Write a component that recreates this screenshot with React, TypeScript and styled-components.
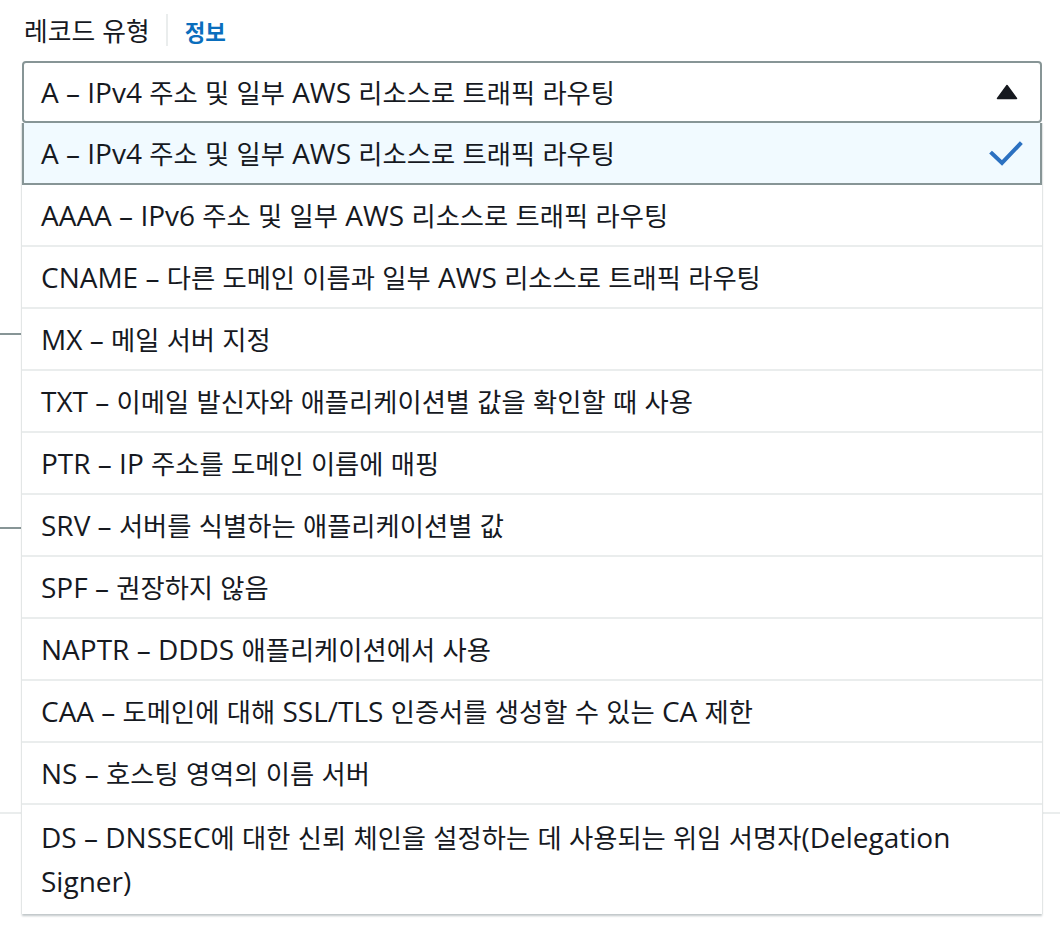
import React from "react";
import styled, { createGlobalStyle } from "styled-components";

const GlobalStyle = createGlobalStyle`
  html, body { margin: 0; padding: 0; background: #ffffff; }
  body {
    font-family: "Open Sans", "Noto Sans CJK KR", sans-serif;
    color: #16191f;
    -webkit-font-smoothing: antialiased;
  }
`;

const Page = styled.div`
  position: relative;
  width: 1060px;
  height: 926px;
  overflow: hidden;
`;

const Field = styled.div`
  position: relative;
  z-index: 2;
  padding: 0 18px 0 22px;
`;

const LabelRow = styled.div`
  display: flex;
  align-items: center;
  height: 44px;
  padding-top: 8px;
  margin-bottom: 9px;
  padding-left: 2px;
`;

const Label = styled.span`
  font-size: 28px;
  line-height: 44px;
  color: #16191f;
`;

const Divider = styled.span`
  width: 2px;
  height: 32px;
  background: #eaeded;
  margin: 0 17px 0 16px;
`;

const InfoLink = styled.span`
  font-size: 28px;
  font-weight: 700;
  color: #0a6ebd;
  line-height: 44px;
`;

const Ko = styled.span<{ $scale?: number }>`
  font-family: "Noto Sans CJK KR", sans-serif;
  font-size: ${(p) => p.$scale ?? 0.94}em;
`;

const Lt = styled.span``;

const SelectWrap = styled.div`
  position: relative;
`;

const SelectBox = styled.div`
  box-sizing: border-box;
  height: 62px;
  border: 2px solid #879596;
  border-radius: 4px;
  display: flex;
  align-items: center;
  justify-content: space-between;
  padding: 0 22px 0 17px;
  font-size: 28px;
  line-height: 44px;
  background: #fff;
`;

const Dropdown = styled.ul`
  position: absolute;
  top: 100%;
  left: 0;
  right: 0;
  margin: 0;
  padding: 0;
  list-style: none;
  background: #fff;
  box-shadow: -1px 0 0 #e3e6e6, 1px 0 0 #e3e6e6, 0 2px 2px rgba(0, 28, 36, 0.25);
`;

const Option = styled.li<{ $selected?: boolean }>`
  box-sizing: border-box;
  display: flex;
  align-items: center;
  justify-content: space-between;
  font-size: 28px;
  line-height: 44px;
  padding: 8px 19px;
  border-bottom: 2px solid #eaeded;
  background: #fff;
  ${(p) =>
    p.$selected &&
    `
    background: #f1faff;
    border: 2px solid #879596;
    border-top: none;
    padding: 8px 17px;
  `}
  &:last-child {
    border-bottom: none;
    padding-top: 10px;
    padding-bottom: 11px;
  }
`;

const OptionText = styled.span`
  flex: 1;
  min-width: 0;
`;

const Backdrop = styled.div`
  position: absolute;
  left: 0;
  right: 0;
  top: 123px;
  z-index: 1;
  display: flex;
  flex-direction: column;
`;

const Section = styled.div<{ $h: number }>`
  height: ${(p) => p.$h}px;
`;

const Stub = styled.div`
  width: 22px;
  height: 2px;
  background: #879596;
`;

const Rule = styled.div`
  height: 2px;
  background: #eaeded;
`;

const KO_RE = /([\uAC00-\uD7A3\u3131-\u318E]+)/;

function Mixed({ text, scale }: { text: string; scale?: number }) {
  const words = text.split(/(\s+)/);
  return (
    <>
      {words.map((w, wi) => {
        if (/^\s+$/.test(w)) return <React.Fragment key={wi}>{w}</React.Fragment>;
        const parts = w.split(KO_RE).filter((p) => p.length > 0);
        return (
          <React.Fragment key={wi}>
            {parts.map((p, i) =>
              KO_RE.test(p) ? (
                <Ko key={i} $scale={scale}>
                  {p}
                </Ko>
              ) : (
                <Lt key={i}>{p}</Lt>
              )
            )}
          </React.Fragment>
        );
      })}
    </>
  );
}

const options = [
  "A – IPv4 주소 및 일부 AWS 리소스로 트래픽 라우팅",
  "AAAA – IPv6 주소 및 일부 AWS 리소스로 트래픽 라우팅",
  "CNAME – 다른 도메인 이름과 일부 AWS 리소스로 트래픽 라우팅",
  "MX – 메일 서버 지정",
  "TXT – 이메일 발신자와 애플리케이션별 값을 확인할 때 사용",
  "PTR – IP 주소를 도메인 이름에 매핑",
  "SRV – 서버를 식별하는 애플리케이션별 값",
  "SPF – 권장하지 않음",
  "NAPTR – DDDS 애플리케이션에서 사용",
  "CAA – 도메인에 대해 SSL/TLS 인증서를 생성할 수 있는 CA 제한",
  "NS – 호스팅 영역의 이름 서버",
  "DS – DNSSEC에 대한 신뢰 체인을 설정하는 데 사용되는 위임 서명자(Delegation Signer)",
];

const Caret = () => (
  <svg width="22" height="16" viewBox="0 0 22 16" aria-hidden>
    <path d="M11 1.5 L20.5 14.5 L1.5 14.5 Z" fill="#16191f" stroke="#16191f" strokeWidth="1.5" strokeLinejoin="round" />
  </svg>
);

const Check = () => (
  <svg width="34" height="26" viewBox="0 0 34 26" aria-hidden>
    <path d="M3 13.5 L13 23 L31 4" fill="none" stroke="#2c71c1" strokeWidth="4" strokeLinecap="square" />
  </svg>
);

export default function App() {
  return (
    <>
      <GlobalStyle />
      <Page>
        <Backdrop>
          <Section $h={210} />
          <Stub />
          <Section $h={192} />
          <Stub />
          <Section $h={283} />
          <Rule />
        </Backdrop>
        <Field>
          <LabelRow>
            <Label>
              <Mixed text="레코드 유형" scale={0.92} />
            </Label>
            <Divider />
            <InfoLink>
              <Mixed text="정보" scale={0.8} />
            </InfoLink>
          </LabelRow>
          <SelectWrap>
            <SelectBox>
              <span>
                <Mixed text={options[0]} />
              </span>
              <Caret />
            </SelectBox>
            <Dropdown>
              {options.map((o, i) => (
                <Option key={o} $selected={i === 0}>
                  <OptionText>
                    <Mixed text={o} />
                  </OptionText>
                  {i === 0 && <Check />}
                </Option>
              ))}
            </Dropdown>
          </SelectWrap>
        </Field>
      </Page>
    </>
  );
}
